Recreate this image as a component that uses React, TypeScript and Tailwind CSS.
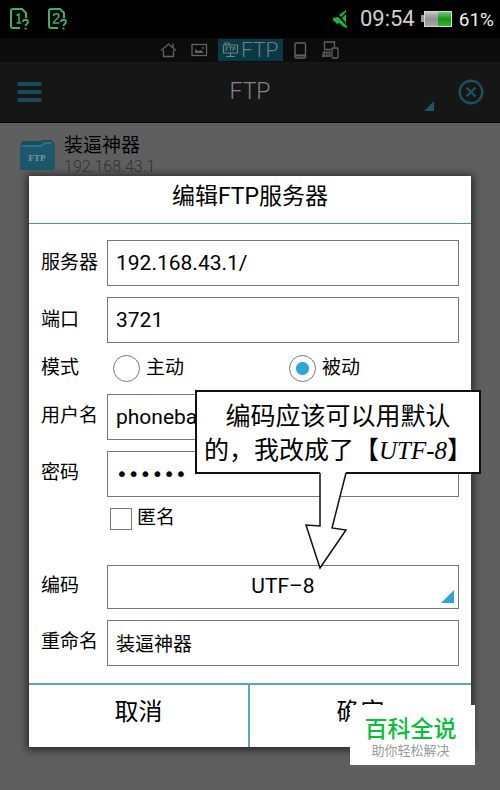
import React, { useState } from "react";

const fieldClass =
  "h-[46px] w-full min-w-0 border border-[#777] bg-white px-2 text-black outline-none";

const StatusBar = () => (
  <div className="flex h-[38px] items-center bg-black pl-2 pr-[6px]">
    <SimIcon slot="1" />
    <div className="w-4" />
    <SimIcon slot="2" />
    <div className="ml-auto flex items-center">
      <svg width="16" height="20" viewBox="0 0 16 20" fill="#1fb43a">
        <path d="M1 9l5-1 4 4 5 5v2l-3-1-5-4-2 1-4-4z" />
        <path d="M7 6l7-5v2L9 8zM10 9l4-4v9z" />
      </svg>
      <span className="ml-3 text-[22px] leading-none text-[#cfcfcf]">09:54</span>
      <svg className="ml-[6px]" width="32" height="18" viewBox="0 0 32 18">
        <defs>
          <linearGradient id="cell" x1="0" y1="0" x2="0" y2="1">
            <stop offset="0" stopColor="#c4c4c4" />
            <stop offset="0.5" stopColor="#8f8f8f" />
            <stop offset="1" stopColor="#a8a8a8" />
          </linearGradient>
          <linearGradient id="charge" x1="0" y1="0" x2="0" y2="1">
            <stop offset="0" stopColor="#7cc47c" />
            <stop offset="0.5" stopColor="#109a10" />
            <stop offset="1" stopColor="#35b535" />
          </linearGradient>
        </defs>
        <rect x="0" y="5" width="3" height="7" fill="#9a9a9a" />
        <rect x="3" y="1" width="28" height="16" fill="#d8d8d8" />
        <rect x="4" y="2" width="13" height="14" fill="url(#cell)" />
        <rect x="17" y="2" width="13" height="14" fill="url(#charge)" />
      </svg>
      <span className="ml-[6px] text-[19px] leading-none text-[#f0f0f0]">61%</span>
    </div>
  </div>
);

const SimIcon = ({ slot }: { slot: string }) => (
  <svg width="22" height="24" viewBox="0 0 22 24" fill="none" stroke="#35b564" strokeWidth="2">
    <path d="M12 21H5a2 2 0 0 1-2-2V4a2 2 0 0 1 2-2h9l4 4v5" />
    {slot === "1" ? (
      <path d="M8.500 8.500L11 7v9M8.500 16h5" strokeWidth="1.500" />
    ) : (
      <path d="M7.500 9c0-3 5.500-3 5.500 0 0 2.500-5 4-5.500 7h6" strokeWidth="1.500" />
    )}
    <path d="M15 15c0-3 5-3 5 0 0 2-2.500 2-2.500 4M17.500 20.500v2" strokeWidth="1.800" />
  </svg>
);

const TabStrip = () => (
  <nav className="flex h-6 items-center bg-[#0c0c0c] pl-[160px] text-[#626262]">
    <a href="#home" aria-label="Home">
      <svg width="17" height="16" viewBox="0 0 17 16" fill="none" stroke="currentColor" strokeWidth="1.300">
        <path d="M1 8.500L8.500 2 16 8.500M3.500 8v6.500h10V8M13 5.500V1.500" />
      </svg>
    </a>
    <a href="#pictures" aria-label="Pictures" className="ml-[14px]">
      <svg width="17" height="14" viewBox="0 0 17 14" fill="none" stroke="currentColor" strokeWidth="1.300">
        <rect x="1" y="1.500" width="14.500" height="11" />
        <path d="M4 10V6l3 2 3-1 3 3z" fill="currentColor" stroke="none" />
        <path d="M11 5h2" />
      </svg>
    </a>
    <a href="#ftp" className="ml-[10px] flex h-[22px] items-center bg-[#083945] px-1 text-[#6b8188]">
      <svg width="17" height="16" viewBox="0 0 17 16" fill="none" stroke="currentColor" strokeWidth="1.200">
        <path d="M3 3V1h4v1.500M1.500 3h14v8h-14zM8.500 11v3M4 14.500h9" />
        <path d="M4 9V5h2.500M4 7h2M7 5h3M8.500 5v4M11 9V5h2v2h-2" strokeWidth="0.900" />
      </svg>
      <span className="ml-[2px] text-[21px] font-light leading-none">FTP</span>
    </a>
    <a href="#phone" aria-label="Phone" className="ml-[11px]">
      <svg width="13" height="17" viewBox="0 0 13 17" fill="none" stroke="currentColor" strokeWidth="1.400">
        <rect x="1" y="1" width="10.500" height="15" rx="1" />
        <path d="M1 13.500h10.500" strokeWidth="2" />
      </svg>
    </a>
    <a href="#devices" aria-label="Devices" className="ml-[15px]">
      <svg width="17" height="18" viewBox="0 0 17 18" fill="none" stroke="currentColor" strokeWidth="1.300">
        <path d="M2.500 7.500V1h10v5M2 8.500h7" />
        <path d="M1 10.500h7.500v5.500H0z" fill="currentColor" stroke="none" />
        <path d="M1 13.200h7M3.500 11v5M6 11v5" stroke="#0c0c0c" strokeWidth="0.600" />
        <rect x="10" y="7" width="6" height="10" rx="1" />
      </svg>
    </a>
  </nav>
);

const AppBar = () => (
  <header className="grid h-[61px] grid-cols-3 items-center border-b border-black bg-[#161616] px-4">
    <button type="button" aria-label="Menu" className="ml-px flex w-[25px] flex-col gap-1">
      <span className="h-1 rounded-sm bg-[#1b495a]" />
      <span className="h-1 rounded-sm bg-[#1b495a]" />
      <span className="h-1 rounded-sm bg-[#1b495a]" />
    </button>
    <h1 className="text-center text-[23px] font-light text-[#858585]">FTP</h1>
    <div className="flex items-center justify-end gap-6">
      <svg className="mt-7" width="10" height="10" viewBox="0 0 10 10">
        <path d="M10 0v10H0z" fill="#1f5568" />
      </svg>
      <button type="button" aria-label="Close">
        <svg width="26" height="26" viewBox="0 0 26 26" fill="none" stroke="#1d5064" strokeWidth="2.400">
          <circle cx="13" cy="13" r="11.300" />
          <path d="M8.500 8.500l9 9M17.500 8.500l-9 9" />
        </svg>
      </button>
    </div>
  </header>
);

const ServerItem = () => (
  <div className="flex items-start px-5 pt-3">
    <svg className="mt-1" width="35" height="34" viewBox="0 0 35 34">
      <path d="M1 5a3 3 0 0 1 3-3h16l3-1h8l3 3v8H1z" fill="#194e5e" />
      <path d="M2 6h19l3-3h7l2 3v7H2z" fill="#2e7287" />
      <path d="M0 8h21l4-3h8l2 2v22a2 2 0 0 1-2 2H2a2 2 0 0 1-2-2z" fill="#1c586d" />
      <text x="17" y="22" textAnchor="middle" fontSize="9" fontWeight="700" fill="#7d979f" fontFamily="Liberation Serif, serif">
        FTP
      </text>
    </svg>
    <div className="ml-[9px]">
      <p className="text-[19px] leading-[22px] text-black">装逼神器</p>
      <p className="text-[16px] font-light leading-[20px] text-[#333]">192.168.43.1</p>
    </div>
  </div>
);

const Row = ({ label, id, children }: { label: string; id?: string; children: React.ReactNode }) => (
  <div className="flex items-center">
    <label htmlFor={id} className="w-[66px] shrink-0 text-[19px]">
      {label}
    </label>
    {children}
  </div>
);

const Radio = ({ label, checked, onChange }: { label: string; checked: boolean; onChange: () => void }) => (
  <label className="flex flex-1 items-center gap-[6px] pl-[6px] text-[19px]">
    <input
      type="radio"
      name="mode"
      checked={checked}
      onChange={onChange}
      className="size-[27px] appearance-none rounded-full border border-[#777] checked:bg-[radial-gradient(circle,#2ba6d5_6px,transparent_7px)]"
    />
    {label}
  </label>
);

const Callout = () => (
  <div className="absolute -right-[10px] top-[214px] w-[286px]">
    <div className="border-2 border-[#111] bg-white pb-1 pt-2 text-center text-[25px] leading-[34px] text-black">
      <p>编码应该可以用默认</p>
      <p className="whitespace-nowrap">
        的，我改成了【<i className="font-['Liberation_Serif',serif]">UTF-8</i>】
      </p>
    </div>
    <svg className="-mt-[2px] ml-[109px] block" width="44" height="98" viewBox="0 0 44 98">
      <path d="M16 0V54L2 53L16 96L42 58L28 56L42 0z" fill="#fff" />
      <path d="M16 1V54L2 53L16 96L42 58L28 56L42 1" fill="none" stroke="#111" strokeWidth="1.500" />
    </svg>
  </div>
);

const Watermark = () => (
  <div className="absolute -bottom-[18px] -right-1 h-[60px] w-[125px] bg-white pr-1 pt-3 text-center">
    <p className="text-[23px] font-medium leading-[26px] text-[#08c038]">百科全说</p>
    <p className="text-[13px] leading-[16px] text-[#999]">助你轻松解决</p>
  </div>
);

const EditDialog = () => {
  const [passive, setPassive] = useState(true);

  return (
    <form
      className="absolute inset-x-[29px] top-44 bg-white text-black shadow-[0_1px_8px_2px_rgba(0,0,0,0.6)]"
      onSubmit={(e) => e.preventDefault()}
    >
      <h2 className="h-12 border-b border-[#3f97a8] text-center text-[23px] leading-[42px]">
        编辑FTP服务器
      </h2>

      <div className="flex flex-col gap-[11px] px-3 pb-[17px] pt-4">
        <Row label="服务器" id="server">
          <input id="server" defaultValue="192.168.43.1/" className={`${fieldClass} text-[21px]`} />
        </Row>
        <Row label="端口" id="port">
          <input id="port" defaultValue="3721" className={`${fieldClass} text-[21px]`} />
        </Row>
        <Row label="模式">
          <div className="flex flex-1">
            <Radio label="主动" checked={!passive} onChange={() => setPassive(false)} />
            <Radio label="被动" checked={passive} onChange={() => setPassive(true)} />
          </div>
        </Row>
        <Row label="用户名" id="user">
          <input id="user" defaultValue="phonebackup" className={`${fieldClass} text-[21px]`} />
        </Row>
        <Row label="密码" id="password">
          <input
            id="password"
            type="password"
            defaultValue="123456"
            className={`${fieldClass} font-['DejaVu_Sans',sans-serif] text-[20px]`}
          />
        </Row>
        <label className="mb-6 ml-[69px] flex h-[22px] items-center gap-[5px] text-[19px]">
          <input type="checkbox" className="size-[22px] appearance-none border border-[#777] checked:bg-[#2ba6d5]" />
          匿名
        </label>
        <Row label="编码" id="encoding">
          <div className="relative flex-1">
            <select
              id="encoding"
              className="block h-11 w-full appearance-none border border-[#777] bg-white text-center text-[21px] [text-align-last:center]"
            >
              <option>UTF–8</option>
            </select>
            <svg className="pointer-events-none absolute bottom-[6px] right-[5px]" width="13" height="13" viewBox="0 0 13 13">
              <path d="M13 0v13H0z" fill="#2ba6d5" />
            </svg>
          </div>
        </Row>
        <Row label="重命名" id="rename">
          <input id="rename" defaultValue="装逼神器" className={`${fieldClass} text-[19px]`} />
        </Row>
      </div>

      <div className="grid h-[64px] grid-cols-2 border-t-2 border-[#5aa9ab] text-[24px]">
        <button type="button" className="border-r-2 border-[#5aa9ab] pb-2">取消</button>
        <button type="submit" className="pb-2">确定</button>
      </div>

      <Callout />
      <Watermark />
    </form>
  );
};

export default function App() {
  return (
    <main className="relative min-h-screen overflow-hidden bg-[#5f5f5f] font-['Roboto','Noto_Sans_CJK_SC',sans-serif]">
      <StatusBar />
      <TabStrip />
      <AppBar />
      <ServerItem />
      <EditDialog />
    </main>
  );
}
